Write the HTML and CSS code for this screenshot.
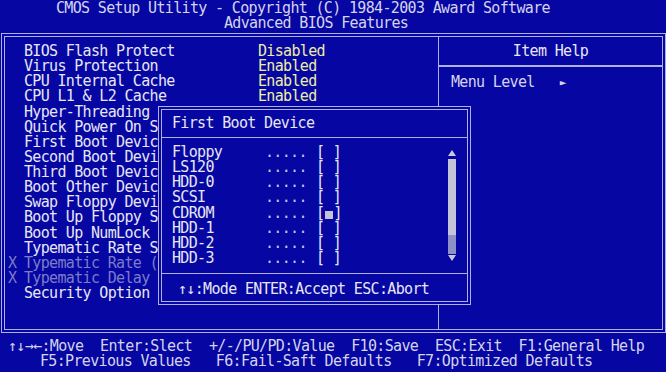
FILE: index.html
```html
<!DOCTYPE html>
<html lang="en">
<head>
	<meta charset="UTF-8">
	<title>Advanced BIOS Features</title>
	<link rel="stylesheet" href="styles.css">
</head>
<body>
	<header class="title">
		<div class="title-line title-main">CMOS Setup Utility - Copyright (C) 1984-2003 Award Software</div>
		<div class="title-line title-sub">Advanced BIOS Features</div>
	</header>

	<main class="screen">
		<section class="settings">
			<div class="row"><span class="mark"></span><span class="label">BIOS Flash Protect</span><span class="value">Disabled</span></div>
			<div class="row"><span class="mark"></span><span class="label">Virus Protection</span><span class="value">Enabled</span></div>
			<div class="row"><span class="mark"></span><span class="label">CPU Internal Cache</span><span class="value">Enabled</span></div>
			<div class="row"><span class="mark"></span><span class="label">CPU L1 &amp; L2 Cache</span><span class="value">Enabled</span></div>
			<!-- the popup hides the rest of these rows, only the visible part is kept -->
			<div class="row"><span class="mark"></span><span class="label">Hyper-Threading</span></div>
			<div class="row"><span class="mark"></span><span class="label">Quick Power On S</span></div>
			<div class="row"><span class="mark"></span><span class="label">First Boot Devic</span></div>
			<div class="row"><span class="mark"></span><span class="label">Second Boot Devi</span></div>
			<div class="row"><span class="mark"></span><span class="label">Third Boot Devic</span></div>
			<div class="row"><span class="mark"></span><span class="label">Boot Other Devic</span></div>
			<div class="row"><span class="mark"></span><span class="label">Swap Floppy Devi</span></div>
			<div class="row"><span class="mark"></span><span class="label">Boot Up Floppy S</span></div>
			<div class="row"><span class="mark"></span><span class="label">Boot Up NumLock</span></div>
			<div class="row"><span class="mark"></span><span class="label">Typematic Rate S</span></div>
			<div class="row row-off"><span class="mark">X</span><span class="label">Typematic Rate (</span></div>
			<div class="row row-off"><span class="mark">X</span><span class="label">Typematic Delay</span></div>
			<div class="row"><span class="mark"></span><span class="label">Security Option</span></div>
		</section>

		<aside class="help">
			<div class="help-head">Item Help</div>
			<div class="help-body">Menu Level   <span class="help-arrow">&#9658;</span></div>
		</aside>

		<div class="popup">
			<div class="popup-title">First Boot Device</div>
			<div class="popup-body">
				<div class="options">
					<div class="option"><span>Floppy</span><span class="dots">.....</span><span>[ ]</span></div>
					<div class="option"><span>LS120</span><span class="dots">.....</span><span>[ ]</span></div>
					<div class="option"><span>HDD-0</span><span class="dots">.....</span><span>[ ]</span></div>
					<div class="option"><span>SCSI</span><span class="dots">.....</span><span>[ ]</span></div>
					<div class="option"><span>CDROM</span><span class="dots">.....</span><span>[<i class="picked"></i>]</span></div>
					<div class="option"><span>HDD-1</span><span class="dots">.....</span><span>[ ]</span></div>
					<div class="option"><span>HDD-2</span><span class="dots">.....</span><span>[ ]</span></div>
					<div class="option"><span>HDD-3</span><span class="dots">.....</span><span>[ ]</span></div>
				</div>
				<div class="scroll">
					<div class="scroll-up"></div>
					<div class="scroll-thumb"></div>
					<div class="scroll-track"></div>
					<div class="scroll-down"></div>
				</div>
			</div>
			<div class="popup-foot">↑↓:Mode ENTER:Accept ESC:Abort</div>
		</div>
	</main>

	<footer class="keys">
		<div class="keys-line keys-top">↑↓→←:Move  Enter:Slect  +/-/PU/PD:Value  F10:Save  ESC:Exit  F1:General Help</div>
		<div class="keys-line keys-bottom">F5:Previous Values   F6:Fail-Saft Defaults   F7:Optimized Defaults</div>
	</footer>
</body>
</html>
```

FILE: styles.css
```css
* {
	box-sizing: border-box;
}

html, body {
	margin: 0;
	padding: 0;
}

body {
	width: 666px;
	height: 372px;
	overflow: hidden;
	background: #0606a2;
	color: #e6e6f4;
	font-family: "DejaVu Sans Mono", "Liberation Mono", monospace;
	font-size: 15px;
	letter-spacing: -0.66px;
	line-height: 15.125px;
}

/* title */
.title {
	padding-top: 1px;
	color: #d4d4ec;
}

.title-line {
	line-height: 15px;
	white-space: pre;
}

.title-main {
	padding-left: 56px;
}

.title-sub {
	padding-left: 224px;
}

/* main frame */
.screen {
	position: relative;
	display: grid;
	grid-template-columns: 433px 1fr;
	width: 665px;
	height: 300px;
	margin: 2px 0 0 1px;
	border: 4px double #b0b0e8;
}

.settings {
	padding: 7px 0 0 3px;
}

.row {
	display: grid;
	grid-template-columns: 16px 234px 1fr;
	white-space: nowrap;
}

.value {
	color: #eeeea2;
}

.row-off {
	color: #7c7cc8;
}

/* item help */
.help {
	border-left: 1px solid #b0b0e8;
}

.help-head {
	padding: 7px 0 6px;
	text-align: center;
	line-height: 15px;
	border-bottom: 2px solid #b0b0e8;
}

.help-body {
	padding: 8px 0 0 12px;
	white-space: pre;
	color: #d4d4ec;
}

.help-arrow {
	font-size: 11px;
	vertical-align: 1px;
}

/* popup */
.popup {
	position: absolute;
	left: 153px;
	top: 69px;
	width: 313px;
	height: 199px;
	display: flex;
	flex-direction: column;
	background: #0606a2;
	border: 4px double #b0b0e8;
}

.popup-title {
	padding: 6px 10px 6px;
	line-height: 15px;
	border-bottom: 1px solid #b0b0e8;
}

.popup-body {
	flex: 1;
	display: flex;
	padding: 7px 11px 0 10px;
}

.options {
	flex: 1;
}

.option {
	display: grid;
	grid-template-columns: 93px 51px auto;
	white-space: pre;
}

.dots {
	color: #c8c8e4;
}

.picked {
	display: inline-block;
	width: 8px;
	height: 8px;
	margin: 0 0 0 1px;
	background: #c4c4d8;
	vertical-align: -1px;
}

.scroll {
	width: 8px;
	padding-top: 5px;
}

.scroll-up,
.scroll-down {
	width: 0;
	height: 0;
	margin: 0 auto;
	border-left: 4px solid transparent;
	border-right: 4px solid transparent;
}

.scroll-up {
	border-bottom: 6px solid #c8c8e4;
}

.scroll-thumb {
	height: 76px;
	margin-top: 3px;
	background: #c4c4d8;
}

.scroll-track {
	height: 19px;
	background: radial-gradient(circle, #9090c8 0.8px, transparent 1px) 0 0 / 2px 2px;
}

.scroll-down {
	margin-top: 1px;
	border-top: 6px solid #c8c8e4;
}

.popup-foot {
	padding: 8px 16px 4px;
	line-height: 15px;
	border-top: 1px solid #b0b0e8;
	white-space: pre;
}

/* key hints */
.keys {
	margin-top: 6px;
	color: #d4d4ec;
}

.keys-line {
	line-height: 15px;
	white-space: pre;
}

.keys-top {
	padding-left: 8px;
}

.keys-bottom {
	padding-left: 40px;
}
```
